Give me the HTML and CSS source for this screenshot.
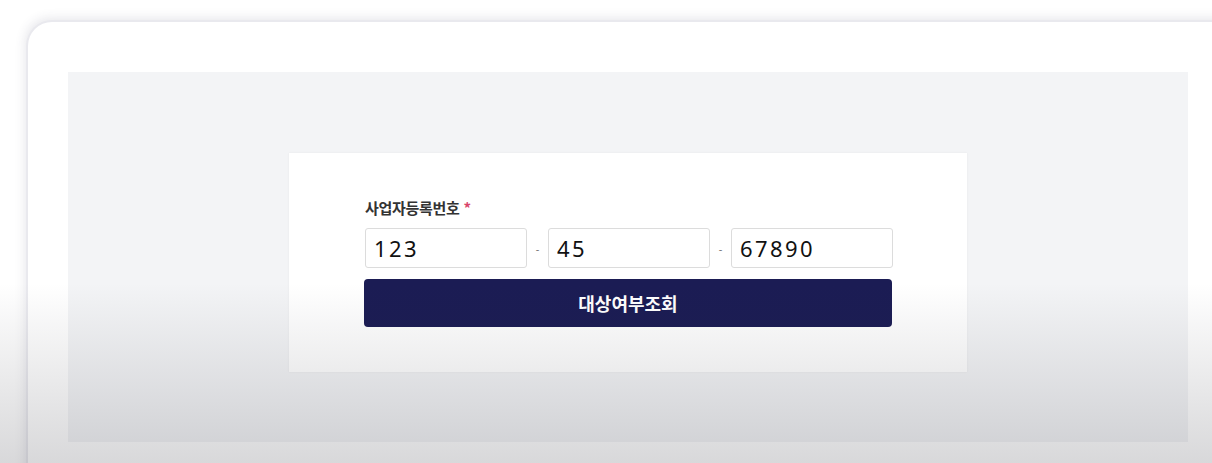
FILE: index.html
```html
<!DOCTYPE html>
<html lang="ko">
<head>
    <meta charset="UTF-8">
    <meta name="viewport" content="width=device-width, initial-scale=1.0">
    <title>대상여부조회</title>
    <link rel="stylesheet" href="styles.css">
</head>
<body>
    <div class="screen">
        <div class="frame">
            <div class="panel">
                <div class="card">
                    <div class="label">사업자등록번호 <span class="required">*</span></div>
                    <div class="bizRow">
                        <input class="bizInput" type="text" value="123" maxlength="3" />
                        <span class="dash">-</span>
                        <input class="bizInput" type="text" value="45" maxlength="2" />
                        <span class="dash">-</span>
                        <input class="bizInput" type="text" value="67890" maxlength="5" />
                    </div>
                    <button class="checkButton">대상여부조회</button>
                </div>
            </div>
        </div>
        <div class="fade"></div>
    </div>
</body>
</html>
```

FILE: styles.css
```css
body {
    margin: 0;
    background: #ffffff;
    font-family: 'Noto Sans', 'Noto Sans CJK KR', sans-serif;
}

.screen {
    position: relative;
    width: 1212px;
    height: 463px;
    overflow: hidden;
    padding-top: 22px;
    box-sizing: border-box;
}

.frame {
    margin-left: 28px;
    width: 1220px;
    height: 480px;
    background: #ffffff;
    border-radius: 24px 0 0 0;
    box-shadow: 0 0 0 2px #e9e9ee, -2px -3px 12px rgba(60, 60, 90, 0.14);
    padding: 50px 0 0 40px;
    box-sizing: border-box;
}

.panel {
    width: 1120px;
    height: 370px;
    background: #f3f4f6;
    padding-top: 81px;
    box-sizing: border-box;
}

.card {
    width: 678px;
    height: 219px;
    margin: 0 auto;
    background: #ffffff;
    box-shadow: 0 0 2px rgba(0, 0, 0, 0.06);
    padding: 43px 0 0 76px;
    box-sizing: border-box;
}

.label {
    font-family: 'Noto Sans CJK KR', sans-serif;
    font-size: 15px;
    font-weight: 700;
    line-height: 23px;
    color: #333333;
    letter-spacing: -0.3px;
    margin-bottom: 9px;
}

.required {
    color: #d9466b;
}

.bizRow {
    display: flex;
    align-items: center;
    width: 528px;
}

.bizInput {
    width: 162px;
    height: 40px;
    box-sizing: border-box;
    border: 1px solid #dcdcdc;
    border-radius: 3px;
    padding: 0 8px;
    font-family: 'Noto Sans', sans-serif;
    font-size: 22px;
    letter-spacing: 2.4px;
    color: #111111;
    background: #ffffff;
}

.dash {
    width: 21px;
    text-align: center;
    font-size: 11px;
    color: #777777;
}

.checkButton {
    display: block;
    width: 528px;
    height: 48px;
    margin-top: 11px;
    margin-left: -1px;
    border: none;
    border-radius: 4px;
    background: #1b1c54;
    color: #ffffff;
    font-family: 'Noto Sans CJK KR', sans-serif;
    font-size: 18px;
    font-weight: 700;
    cursor: pointer;
}

.fade {
    position: absolute;
    left: 0;
    right: 0;
    bottom: 0;
    height: 180px;
    background: linear-gradient(to bottom, rgba(0, 0, 0, 0), rgba(40, 40, 50, 0.18));
    pointer-events: none;
}
```
